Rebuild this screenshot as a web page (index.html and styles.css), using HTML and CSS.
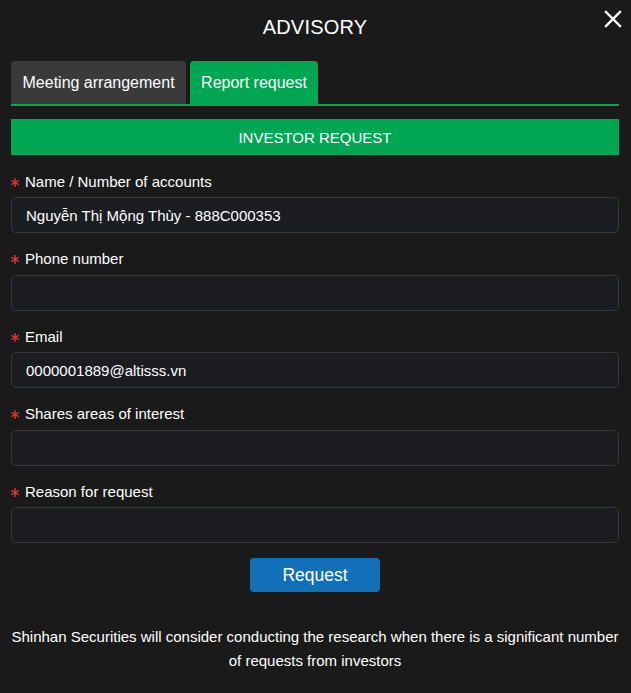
FILE: index.html
```html
<!DOCTYPE html>
<html>
<head>
<meta charset="utf-8">
<link rel="stylesheet" href="styles.css">
</head>
<body>
<div class="modal">
  <div class="header">
    <h1 class="title">ADVISORY</h1>
    <button class="close" aria-label="Close">
      <svg width="18" height="18" viewBox="0 0 18 18"><path d="M2 2 L16 16 M16 2 L2 16" stroke="#fff" stroke-width="2.4" stroke-linecap="square"/></svg>
    </button>
  </div>
  <div class="tabs">
    <div class="tab">Meeting arrangement</div>
    <div class="tab active">Report request</div>
  </div>
  <div class="bar">INVESTOR REQUEST</div>
  <form class="form">
    <div class="field">
      <label class="label"><svg class="req" viewBox="0 0 8 9" width="8" height="9"><path d="M4 0 V9 M0.1 2.25 L7.9 6.75 M0.1 6.75 L7.9 2.25" stroke="#e0353a" stroke-width="1.4"/></svg>Name / Number of accounts</label>
      <div class="input">Nguyễn Thị Mộng Thùy - 888C000353</div>
    </div>
    <div class="field">
      <label class="label"><svg class="req" viewBox="0 0 8 9" width="8" height="9"><path d="M4 0 V9 M0.1 2.25 L7.9 6.75 M0.1 6.75 L7.9 2.25" stroke="#e0353a" stroke-width="1.4"/></svg>Phone number</label>
      <div class="input"></div>
    </div>
    <div class="field">
      <label class="label"><svg class="req" viewBox="0 0 8 9" width="8" height="9"><path d="M4 0 V9 M0.1 2.25 L7.9 6.75 M0.1 6.75 L7.9 2.25" stroke="#e0353a" stroke-width="1.4"/></svg>Email</label>
      <div class="input">0000001889@altisss.vn</div>
    </div>
    <div class="field">
      <label class="label"><svg class="req" viewBox="0 0 8 9" width="8" height="9"><path d="M4 0 V9 M0.1 2.25 L7.9 6.75 M0.1 6.75 L7.9 2.25" stroke="#e0353a" stroke-width="1.4"/></svg>Shares areas of interest</label>
      <div class="input"></div>
    </div>
    <div class="field">
      <label class="label"><svg class="req" viewBox="0 0 8 9" width="8" height="9"><path d="M4 0 V9 M0.1 2.25 L7.9 6.75 M0.1 6.75 L7.9 2.25" stroke="#e0353a" stroke-width="1.4"/></svg>Reason for request</label>
      <div class="input"></div>
    </div>
    <div class="actions">
      <button type="button" class="btn">Request</button>
    </div>
  </form>
  <p class="note">Shinhan Securities will consider conducting the research when there is a significant number of requests from investors</p>
</div>
</body>
</html>
```
FILE: styles.css
```css
* { box-sizing: border-box; }
html, body { margin: 0; padding: 0; background: #1a1a1a; }
body { font-family: "Liberation Sans", Arial, sans-serif; color: #fff; }
.modal { position: relative; padding: 0 12px 0 11px; }
.header { height: 54px; display: flex; align-items: center; justify-content: center; }
.title { margin: 0; font-size: 20px; font-weight: normal; letter-spacing: 0.2px; }
.close { position: absolute; top: 10px; right: 9px; background: none; border: 0; padding: 0; width: 18px; height: 18px; cursor: pointer; }
.close svg { display: block; }
.tabs { margin-top: 7px; display: flex; gap: 4px; border-bottom: 2px solid #00a651; }
.tab { height: 43px; padding: 0 11px 0 11.5px; display: flex; align-items: center; font-size: 16px; background: #3a3a3a; border-radius: 4px 4px 0 0; color: #fff; }
.tab.active { background: #00a651; }
.bar { margin-top: 13px; height: 36px; background: #00a651; display: flex; align-items: center; justify-content: center; font-size: 15px; }
.form { margin: 0; padding-top: 17px; }
.field { margin-bottom: 16.5px; }
.label { display: flex; align-items: center; height: 18px; font-size: 15px; margin-bottom: 7px; color: #fff; }
.req { display: block; flex: none; margin-right: 6px; position: relative; top: 1px; }
.input { height: 36px; background: #1b1d21; border: 1px solid #35383d; border-radius: 5px; padding: 0 14px; display: flex; align-items: center; font-size: 15px; color: #fff; }
.actions { display: flex; justify-content: center; margin-top: -1.5px; }
.btn { width: 130px; height: 34px; background: #1170b8; border: 0; border-radius: 4px; color: #fff; font-family: "Liberation Sans", Arial, sans-serif; font-size: 17.5px; }
.note { margin: 33px -2px 0; text-align: center; font-size: 15px; line-height: 24px; color: #fff; }
```
